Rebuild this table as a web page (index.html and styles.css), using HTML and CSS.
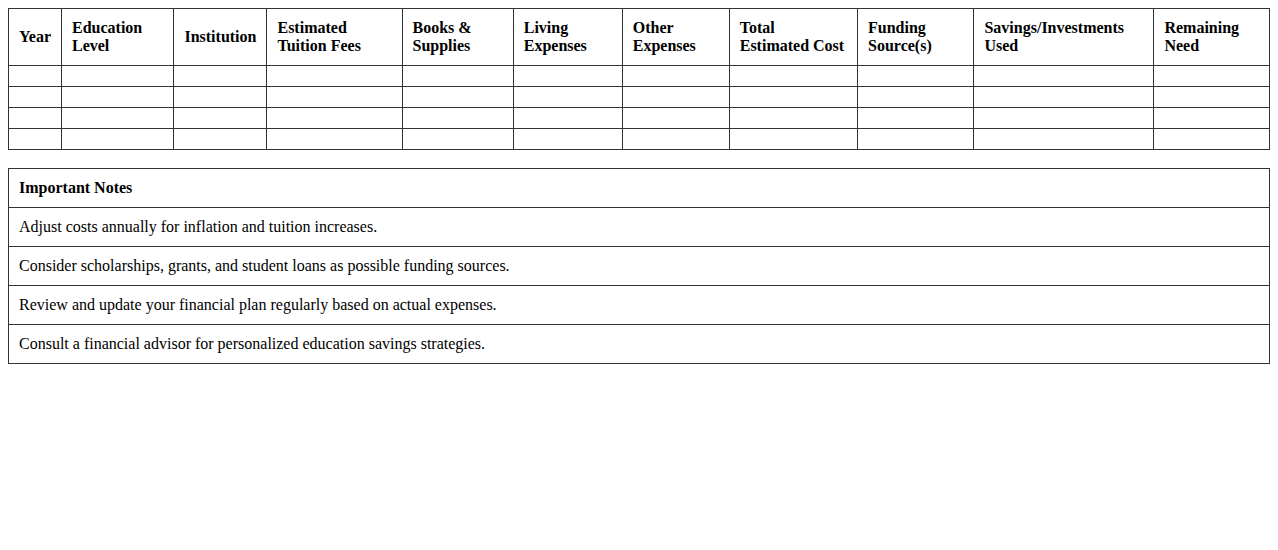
FILE: index.html
```html
<!DOCTYPE html>
<html>
<head>
<meta charset="utf-8">
<link rel="stylesheet" href="styles.css">
</head>
<body>
<table class="plan">
  <thead>
    <tr>
      <th>Year</th>
      <th>Education Level</th>
      <th>Institution</th>
      <th>Estimated Tuition Fees</th>
      <th>Books &amp; Supplies</th>
      <th>Living Expenses</th>
      <th>Other Expenses</th>
      <th>Total Estimated Cost</th>
      <th>Funding Source(s)</th>
      <th>Savings/Investments Used</th>
      <th>Remaining Need</th>
    </tr>
  </thead>
  <tbody>
    <tr><td></td><td></td><td></td><td></td><td></td><td></td><td></td><td></td><td></td><td></td><td></td></tr>
    <tr><td></td><td></td><td></td><td></td><td></td><td></td><td></td><td></td><td></td><td></td><td></td></tr>
    <tr><td></td><td></td><td></td><td></td><td></td><td></td><td></td><td></td><td></td><td></td><td></td></tr>
    <tr><td></td><td></td><td></td><td></td><td></td><td></td><td></td><td></td><td></td><td></td><td></td></tr>
  </tbody>
</table>
<table class="notes">
  <thead>
    <tr><th>Important Notes</th></tr>
  </thead>
  <tbody>
    <tr><td>Adjust costs annually for inflation and tuition increases.</td></tr>
    <tr><td>Consider scholarships, grants, and student loans as possible funding sources.</td></tr>
    <tr><td>Review and update your financial plan regularly based on actual expenses.</td></tr>
    <tr><td>Consult a financial advisor for personalized education savings strategies.</td></tr>
  </tbody>
</table>
</body>
</html>
```
FILE: styles.css
```css
body {
  margin: 8px;
  font-family: "Liberation Serif", "Times New Roman", serif;
  font-size: 16px;
  color: #000;
  background: #fff;
}
table {
  width: 100%;
  border-collapse: collapse;
}
th, td {
  border: 1px solid #333;
  padding: 10px;
  text-align: left;
  vertical-align: middle;
  font-size: 16px;
}
th {
  font-weight: bold;
}
.plan {
  margin-bottom: 18px;
}
```
